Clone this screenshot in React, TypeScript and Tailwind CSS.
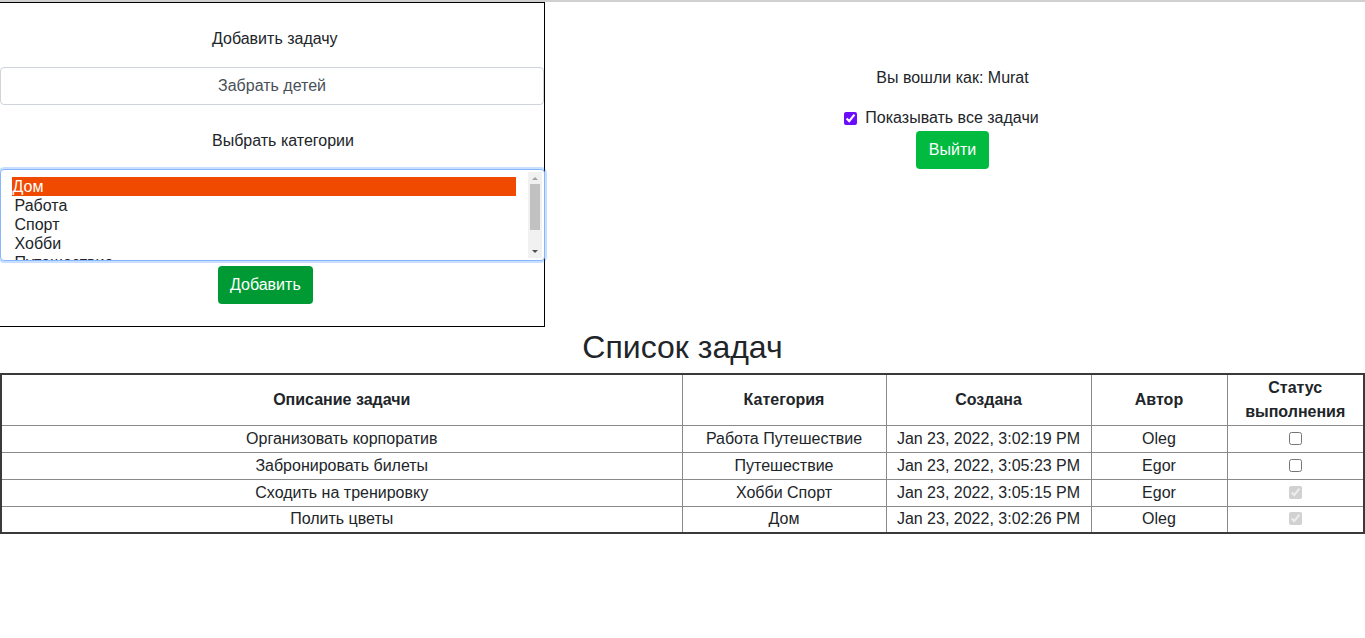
import React from "react";

const rows = [
  { text: "Организовать корпоратив", cat: "Работа Путешествие", date: "Jan 23, 2022, 3:02:19 PM", author: "Oleg", done: false },
  { text: "Забронировать билеты", cat: "Путешествие", date: "Jan 23, 2022, 3:05:23 PM", author: "Egor", done: false },
  { text: "Сходить на тренировку", cat: "Хобби Спорт", date: "Jan 23, 2022, 3:05:15 PM", author: "Egor", done: true },
  { text: "Полить цветы", cat: "Дом", date: "Jan 23, 2022, 3:02:26 PM", author: "Oleg", done: true },
];

const categories = ["Дом", "Работа", "Спорт", "Хобби", "Путешествие"];

function CategoryList() {
  return (
    <div className="relative mt-[16px] h-[92px] w-[545px] rounded-[4px] border border-[#86b7fe] bg-white shadow-[0_0_0_2px_rgba(13,110,253,0.22)]">
      <div className="h-full overflow-hidden pl-[11px] pr-[28px] pt-[7px] text-[16px] leading-[19px] text-[#212529]">
        {categories.map((c, i) => (
          <div key={c} className={i === 0 ? "bg-[#f04a00] pl-[1px] text-white" : "pl-[3px]"}>
            {c}
          </div>
        ))}
      </div>
      <div className="absolute right-[2px] top-[2px] flex h-[86px] w-[14px] flex-col items-center bg-[#f1f1f1]">
        <svg width="14" height="12" viewBox="0 0 14 12">
          <path d="M4 8 L7 5 L10 8 Z" fill="#a3a3a3" />
        </svg>
        <div className="h-[46px] w-[10px] bg-[#c1c1c1]" />
        <div className="flex-1" />
        <svg width="14" height="12" viewBox="0 0 14 12">
          <path d="M4 4 L7 7 L10 4 Z" fill="#505050" />
        </svg>
      </div>
    </div>
  );
}

export default function App() {
  return (
    <div className="min-h-[638px] bg-white font-['Liberation_Sans',Arial,sans-serif] text-[16px] text-[#212529]">
      <div className="h-[2px] bg-[#d0d0d0]" />
      <div className="flex">
        <div className="flex h-[325px] w-[545px] flex-col items-center border-b border-r border-t border-black">
          <p className="mt-[24px] self-start pl-[212px] leading-[24px]">Добавить задачу</p>
          <input
            readOnly
            value="Забрать детей"
            className="mt-[16px] h-[38px] w-[544px] rounded-[4px] border border-[#ced4da] text-center text-[16px] text-[#495057] outline-none"
          />
          <p className="mt-[24px] self-start pl-[212px] leading-[24px]">Выбрать категории</p>
          <CategoryList />
          <button className="ml-[218px] mt-[5px] h-[38px] self-start rounded-[4px] bg-[#009a35] px-[12px] text-white">
            Добавить
          </button>
        </div>
        <div className="flex flex-1 flex-col items-center pr-[5px] pt-[64px]">
          <p className="leading-[24px]">Вы вошли как: Murat</p>
          <label className="mr-[22px] mt-[16px] flex items-center gap-[8px] leading-[24px]">
            <input type="checkbox" defaultChecked className="h-[13px] w-[13px] accent-[#6a0dff]" />
            Показывать все задачи
          </label>
          <button className="mt-[1px] h-[38px] rounded-[4px] bg-[#00bb40] px-[13px] text-white">Выйти</button>
        </div>
      </div>
      <h2 className="mt-[0px] text-center text-[32px] leading-[40px]">Список задач</h2>
      <table className="mt-[6px] w-full border-collapse border-2 border-[#3a3a3a] text-center">
        <thead>
          <tr className="h-[51px]">
            <th className="w-[681px] border border-[#8a8a8a] font-bold leading-[24px]">Описание задачи</th>
            <th className="w-[204px] border border-[#8a8a8a] font-bold leading-[24px]">Категория</th>
            <th className="w-[205px] border border-[#8a8a8a] font-bold leading-[24px]">Создана</th>
            <th className="w-[136px] border border-[#8a8a8a] font-bold leading-[24px]">Автор</th>
            <th className="border border-[#8a8a8a] font-bold leading-[24px]">
              Статус
              <br />
              выполнения
            </th>
          </tr>
        </thead>
        <tbody>
          {rows.map((r) => (
            <tr key={r.text} className="h-[27px]">
              <td className="border border-[#8a8a8a] leading-[24px]">{r.text}</td>
              <td className="border border-[#8a8a8a] leading-[24px]">{r.cat}</td>
              <td className="border border-[#8a8a8a] leading-[24px]">{r.date}</td>
              <td className="border border-[#8a8a8a] leading-[24px]">{r.author}</td>
              <td className="border border-[#8a8a8a] leading-[24px]">
                <input type="checkbox" checked={r.done} disabled={r.done} readOnly className="h-[13px] w-[13px] align-[-1px]" />
              </td>
            </tr>
          ))}
        </tbody>
      </table>
    </div>
  );
}
